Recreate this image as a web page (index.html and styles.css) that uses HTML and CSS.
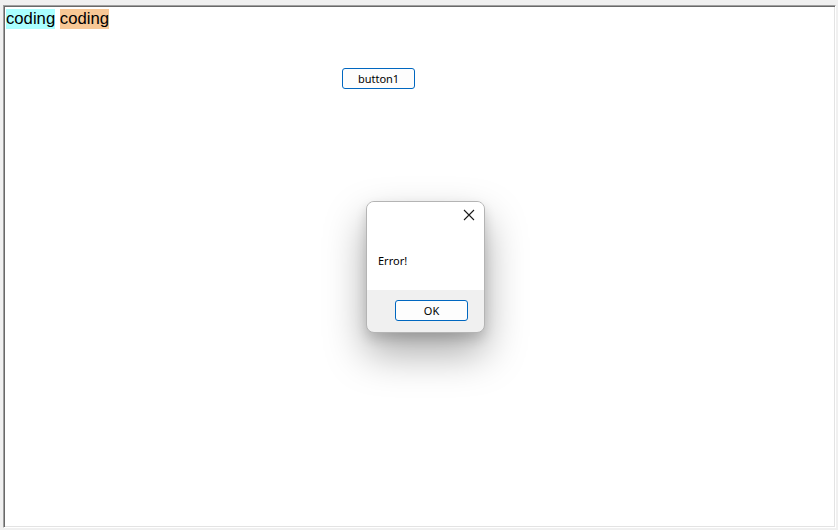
FILE: index.html
```html
<!DOCTYPE html>
<html lang="en">
<head>
    <meta charset="UTF-8">
    <title>coding</title>
    <link rel="stylesheet" href="styles.css">
</head>
<body>
    <div class="frame">
        <div class="labels">
            <span class="tag tag-cyan">coding</span> <span class="tag tag-peach">coding</span>
        </div>
        <button class="btn btn-main">button1</button>
    </div>

    <div class="dialog">
        <div class="dialog-body">
            <div class="dialog-top">
                <span class="dialog-close">
                    <svg width="12" height="12" viewBox="0 0 12 12">
                        <path d="M1 1 L11 11 M11 1 L1 11" stroke="#1a1a1a" stroke-width="1.1" fill="none"/>
                    </svg>
                </span>
            </div>
            <div class="dialog-msg">Error!</div>
        </div>
        <div class="dialog-foot">
            <button class="btn btn-ok">OK</button>
        </div>
    </div>
</body>
</html>
```

FILE: styles.css
```css
* {
    margin: 0;
    padding: 0;
    box-sizing: border-box;
}
html, body {
    height: 100%;
}
body {
    background-color: #f0f0f0;
    font-family: "Liberation Sans", Arial, sans-serif;
    padding: 5px 2px 2px 3px;
    position: relative;
}
.frame {
    height: 100%;
    background: #ffffff;
    border: 1px solid;
    border-color: #a0a0a0 #ffffff #ffffff #a0a0a0;
    box-shadow: inset 1px 1px 0 #696969, inset -1px -1px 0 #e3e3e3;
    padding: 3px 2px;
}
.labels {
    font-size: 16.7px;
    line-height: 20px;
    color: #000;
}
.tag {
    display: inline-block;
    line-height: 20px;
}
.tag-cyan {
    background: #aaffff;
}
.tag-peach {
    background: #f8c896;
}
.btn {
    font-family: "Noto Sans", "Open Sans", sans-serif;
    font-size: 11px;
    color: #000;
    background: #fdfdfd;
    border: 1px solid #0067c0;
    border-radius: 3px;
    box-shadow: inset 0 0 0 1px #fdfdfd;
}
.btn-main {
    display: block;
    width: 73px;
    height: 21px;
    margin: 39px 0 0 336px;
}
.dialog {
    position: absolute;
    left: 366px;
    top: 201px;
    width: 119px;
    height: 132px;
    background: #f0f0f0;
    border: 1px solid #b4b4b4;
    border-radius: 8px;
    overflow: hidden;
    box-shadow: 0 20px 40px rgba(0, 0, 0, 0.34), 0 6px 12px rgba(0, 0, 0, 0.14);
    display: flex;
    flex-direction: column;
}
.dialog-body {
    background: #ffffff;
    height: 88px;
    padding: 0 10px 0 11px;
}
.dialog-top {
    display: flex;
    justify-content: flex-end;
    padding-top: 7px;
    margin-right: -1px;
}
.dialog-close {
    display: flex;
    width: 12px;
    height: 12px;
}
.dialog-msg {
    font-family: "Noto Sans", "Open Sans", sans-serif;
    font-size: 11px;
    margin-top: 32px;
    color: #000;
}
.dialog-foot {
    flex: 1;
    display: flex;
    justify-content: center;
    padding-top: 10px;
}
.btn-ok {
    width: 73px;
    height: 21px;
    margin-left: 12px;
}
```
